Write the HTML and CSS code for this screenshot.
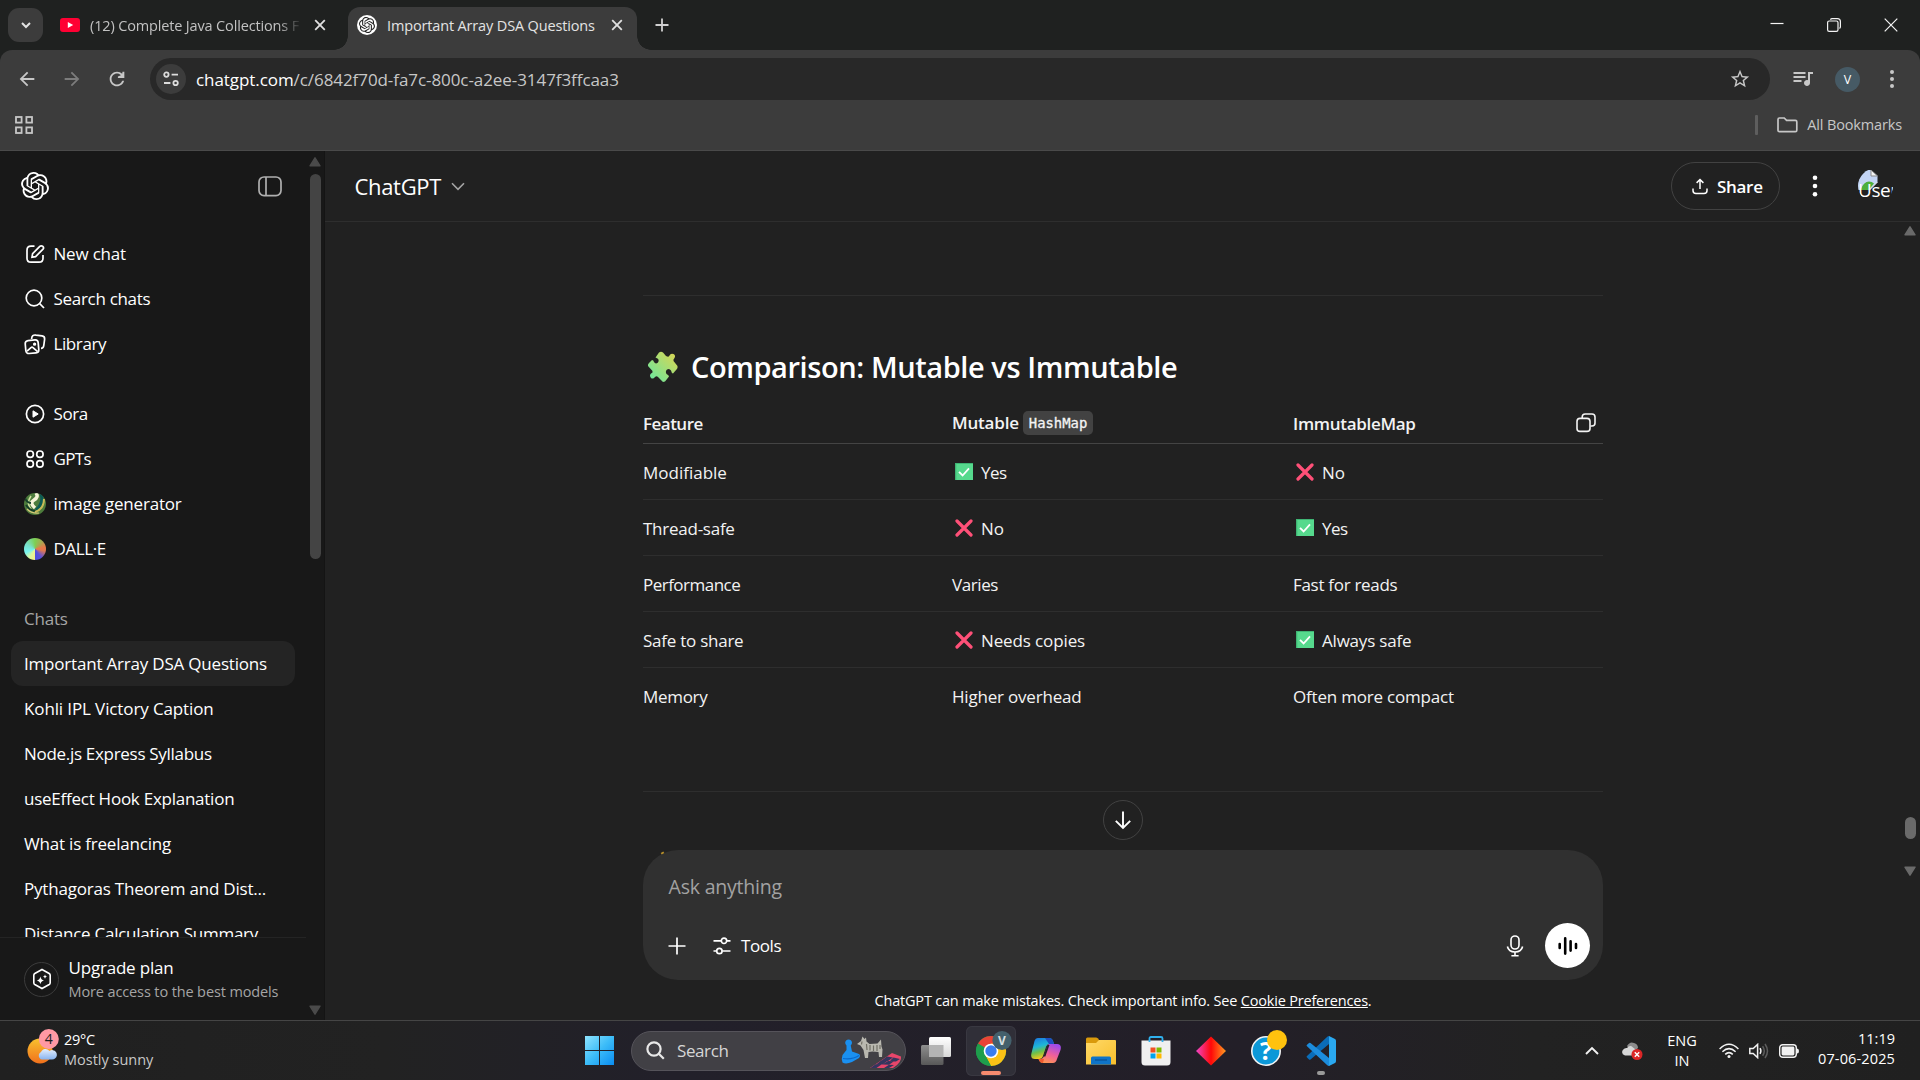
FILE: index.html
```html
<!DOCTYPE html>
<html lang="en">
<head>
<meta charset="utf-8">
<title>Important Array DSA Questions</title>
<link rel="stylesheet" href="styles.css">
</head>
<body>
<svg class="defs" width="0" height="0">
  <defs>
    <symbol id="openai" viewBox="0 0 24 24"><path d="M22.2819 9.8211a5.9847 5.9847 0 0 0-.5157-4.9108 6.0462 6.0462 0 0 0-6.5098-2.9A6.0651 6.0651 0 0 0 4.9807 4.1818a5.9847 5.9847 0 0 0-3.9977 2.9 6.0462 6.0462 0 0 0 .7427 7.0966 5.98 5.98 0 0 0 .511 4.9107 6.051 6.051 0 0 0 6.5146 2.9001A5.9847 5.9847 0 0 0 13.2599 24a6.0557 6.0557 0 0 0 5.7718-4.2058 5.9894 5.9894 0 0 0 3.9977-2.9001 6.0557 6.0557 0 0 0-.7475-7.0729zm-9.022 12.6081a4.4755 4.4755 0 0 1-2.8764-1.0408l.1419-.0804 4.7783-2.7582a.7948.7948 0 0 0 .3927-.6813v-6.7369l2.02 1.1686a.071.071 0 0 1 .038.052v5.5826a4.504 4.504 0 0 1-4.4945 4.4944zm-9.6607-4.1254a4.4708 4.4708 0 0 1-.5346-3.0137l.142.0852 4.783 2.7582a.7712.7712 0 0 0 .7806 0l5.8428-3.3685v2.3324a.0804.0804 0 0 1-.0332.0615L9.74 19.9502a4.4992 4.4992 0 0 1-6.1408-1.6464zM2.3408 7.8956a4.485 4.485 0 0 1 2.3655-1.9728V11.6a.7664.7664 0 0 0 .3879.6765l5.8144 3.3543-2.0201 1.1685a.0757.0757 0 0 1-.071 0l-4.8303-2.7865A4.504 4.504 0 0 1 2.3408 7.872zm16.5963 3.8558L13.1038 8.364 15.1192 7.2a.0757.0757 0 0 1 .071 0l4.8303 2.7913a4.4944 4.4944 0 0 1-.6765 8.1042v-5.6772a.79.79 0 0 0-.407-.667zm2.0107-3.0231l-.142-.0852-4.7735-2.7818a.7759.7759 0 0 0-.7854 0L9.409 9.2297V6.8974a.0662.0662 0 0 1 .0284-.0615l4.8303-2.7866a4.4992 4.4992 0 0 1 6.6802 4.66zM8.3065 12.863l-2.02-1.1638a.0804.0804 0 0 1-.038-.0567V6.0742a4.4992 4.4992 0 0 1 7.3757-3.4537l-.142.0805L8.704 5.459a.7948.7948 0 0 0-.3927.6813zm1.0976-2.3654l2.602-1.4998 2.6069 1.4998v2.9994l-2.5974 1.4997-2.6067-1.4997Z"/></symbol>
    <symbol id="yes" viewBox="0 0 18 18"><rect width="18" height="17" fill="#3fb574"/><rect x="1.3" y="1" width="16.7" height="16" fill="#56d98d"/><path d="M4 8.8l3.6 3.7L14 5.3" fill="none" stroke="#fff" stroke-width="1.8"/></symbol>
    <symbol id="no" viewBox="0 0 18 18"><path d="M2 2l14 14M16 2L2 16" fill="none" stroke="#ff5078" stroke-width="3.2" stroke-linecap="round"/></symbol>
    <linearGradient id="puz" x1="1" y1="0" x2="0" y2="1"><stop offset="0" stop-color="#e0d44e"/><stop offset="1" stop-color="#62e8a4"/></linearGradient>
    <linearGradient id="dia"><stop offset="0" stop-color="#f046c8"/><stop offset=".5" stop-color="#ff0808"/><stop offset="1" stop-color="#ff9a20"/></linearGradient>
    <linearGradient id="cop1" x1="0" y1="0" x2=".3" y2="1"><stop offset="0" stop-color="#1a72e0"/><stop offset=".45" stop-color="#1fb6d8"/><stop offset=".7" stop-color="#6cc04a"/><stop offset="1" stop-color="#f4c81e"/></linearGradient>
    <linearGradient id="cop2" x1=".6" y1="0" x2=".2" y2="1"><stop offset="0" stop-color="#a04bea"/><stop offset=".5" stop-color="#f0609a"/><stop offset="1" stop-color="#ff9a4a"/></linearGradient>
    <linearGradient id="win" x1="0" y1="0" x2="1" y2="1"><stop offset="0" stop-color="#8fe4ff"/><stop offset=".5" stop-color="#3cbcf8"/><stop offset="1" stop-color="#0a8cf0"/></linearGradient>
    <linearGradient id="fold" x1="0" y1="0" x2="1" y2="1"><stop offset="0" stop-color="#ffd968"/><stop offset="1" stop-color="#f8bf2c"/></linearGradient>
    <linearGradient id="sun" x1="0" y1="0" x2="0" y2="1"><stop offset="0" stop-color="#f9c22e"/><stop offset="1" stop-color="#f0701c"/></linearGradient>
    <linearGradient id="cld" x1="0" y1="0" x2="0" y2="1"><stop offset="0" stop-color="#e4eefc"/><stop offset="1" stop-color="#88b4f0"/></linearGradient>
    <linearGradient id="tv1" x1="0" y1="0" x2="0" y2="1"><stop offset="0" stop-color="#ffffff"/><stop offset="1" stop-color="#d8d8d8"/></linearGradient>
    <linearGradient id="tv2" x1="0" y1="0" x2="0" y2="1"><stop offset="0" stop-color="#8e8e8e"/><stop offset="1" stop-color="#585858"/></linearGradient>
    <clipPath id="disc"><circle cx="11" cy="11" r="11"/></clipPath>
  </defs>
</svg>

<div class="tabstrip">
  <div class="tab-search"><svg width="14" height="14" viewBox="0 0 14 14"><path d="M3 5l4 4 4-4" fill="none" stroke="#e3e3e3" stroke-width="2"/></svg></div>
  <div class="tab idle">
    <svg width="20" height="14" viewBox="0 0 20 14"><rect width="20" height="14" rx="3" fill="#ff0033"/><path d="M7.8 4l5.4 3-5.4 3z" fill="#fff"/></svg>
    <span class="tab-title">(12) Complete Java Collections F</span>
    <svg class="x" width="12" height="12" viewBox="0 0 12 12"><path d="M1.2 1.2l9.6 9.6M10.8 1.2l-9.6 9.6"/></svg>
  </div>
  <div class="tab active">
    <span class="favicon"><svg width="16" height="16" fill="#222"><use href="#openai"/></svg></span>
    <span class="tab-title">Important Array DSA Questions</span>
    <svg class="x" width="12" height="12" viewBox="0 0 12 12"><path d="M1.2 1.2l9.6 9.6M10.8 1.2l-9.6 9.6"/></svg>
  </div>
  <svg class="plus" width="14" height="14" viewBox="0 0 14 14"><path d="M7 .5v13M.5 7h13" stroke="#d0d0d0" stroke-width="1.8"/></svg>
  <div class="win-controls">
    <svg width="14" height="14" viewBox="0 0 14 14"><path d="M.5 5.5h13"/></svg>
    <svg width="14" height="14" viewBox="0 0 14 14"><rect x=".6" y="3" width="10.4" height="10.4" rx="1.6"/><path d="M3.4 1.6q.6-1 1.8-1h5.2a3 3 0 0 1 3 3v5.2q0 1-.9 1.6"/></svg>
    <svg width="14" height="14" viewBox="0 0 14 14"><path d="M.7.7l12.6 12.6M13.3.7L.7 13.3"/></svg>
  </div>
</div>

<div class="toolbar-back">
<div class="toolbar">
  <div class="nav">
    <svg width="22" height="22" viewBox="0 0 24 24" fill="#c7c7c7"><path d="M20 11H7.83l5.59-5.59L12 4l-8 8 8 8 1.41-1.41L7.83 13H20z"/></svg>
    <svg width="22" height="22" viewBox="0 0 24 24" fill="#7c7c7c"><path d="M4 11h12.17l-5.59-5.59L12 4l8 8-8 8-1.41-1.41L16.17 13H4z"/></svg>
    <svg width="22" height="22" viewBox="0 0 24 24" fill="#c7c7c7"><path d="M17.65 6.35C16.2 4.9 14.21 4 12 4c-4.42 0-7.99 3.58-7.99 8s3.57 8 7.99 8c3.73 0 6.84-2.55 7.73-6h-2.08c-.82 2.33-3.04 4-5.65 4-3.31 0-6-2.69-6-6s2.69-6 6-6c1.66 0 3.14.69 4.22 1.78L13 9.4v1.6h7V4h-2z"/></svg>
  </div>
  <div class="omnibox">
    <span class="tune"><svg width="16" height="16" viewBox="0 0 16 16" fill="none" stroke="#dcdcdc" stroke-width="1.8"><circle cx="3.4" cy="3.6" r="2.2"/><path d="M8.6 3.6H15M1 12h6.4"/><circle cx="12.6" cy="12" r="2.2"/></svg></span>
    <span class="url">chatgpt.com<i>/c/6842f70d-fa7c-800c-a2ee-3147f3ffcaa3</i></span>
    <svg class="star" width="22" height="22" viewBox="0 0 24 24" fill="#c7c7c7"><path d="M22 9.24l-7.19-.62L12 2 9.19 8.63 2 9.24l5.46 4.73L5.82 21 12 17.27 18.18 21l-1.63-7.03L22 9.24zM12 15.4l-3.76 2.27 1-4.28-3.32-2.88 4.38-.38L12 6.1l1.71 4.04 4.38.38-3.32 2.88 1 4.28L12 15.4z"/></svg>
  </div>
  <svg class="queue" width="24" height="24" viewBox="0 0 24 24" fill="#c7c7c7"><path d="M14.500 5h-12v1.900h12V5zm0 4h-12v1.900h12V9zM2.500 14.900h8V13h-8v1.900zM17 5v8.180c-.31-.11-.65-.18-1-.18-1.660 0-3 1.340-3 3s1.340 3 3 3 3-1.340 3-3V7h3V5h-5z"/></svg>
  <span class="profile">V</span>
  <svg class="kebab" width="6" height="20" viewBox="0 0 6 20" fill="#c7c7c7"><circle cx="3" cy="3" r="2"/><circle cx="3" cy="10" r="2"/><circle cx="3" cy="17" r="2"/></svg>
</div>
</div>

<div class="bookmarks">
  <svg width="18" height="18" viewBox="0 0 18 18" fill="none" stroke="#c7c7c7" stroke-width="1.8"><rect x="1" y="1" width="5.6" height="5.6"/><rect x="11.4" y="1" width="5.6" height="5.6"/><rect x="1" y="11.4" width="5.6" height="5.6"/><rect x="11.4" y="11.4" width="5.6" height="5.6"/></svg>
  <div class="all-bm">
    <span class="sep"></span>
    <svg width="21" height="16" viewBox="0 0 21 16" fill="none" stroke="#c7c7c7" stroke-width="1.7"><path d="M1 13.200V2.400Q1 1 2.400 1h4.800l2.400 2.400h8.800q1.400 0 1.400 1.400v8.400q0 1.400-1.400 1.400H2.400Q1 14.600 1 13.200z"/></svg>
    <span class="bm-text">All Bookmarks</span>
  </div>
</div>

<div class="page">
  <aside class="sidebar">
    <div class="side-col">
      <div class="side-head">
        <svg width="28" height="28" fill="#fff"><use href="#openai"/></svg>
        <svg width="24" height="21" viewBox="0 0 24 21" fill="none" stroke="#afafaf" stroke-width="1.7"><rect x="1" y="1" width="22" height="18.6" rx="5"/><path d="M8 1v18.600"/></svg>
      </div>
      <nav class="menu">
        <a><svg width="22" height="22" viewBox="0 0 22 22" class="ln"><path d="M10.500 3.200H7Q3 3.200 3 7.200v8Q3 19.200 7 19.200h8q4 0 4-4V12"/><path d="M8 14.200l.6-3.600L15.800 3.400a2 2 0 0 1 3 3L11.600 13.600z"/></svg><span class="t17">New chat</span></a>
        <a><svg width="22" height="22" viewBox="0 0 22 22" class="ln"><circle cx="10" cy="10" r="7.8"/><path d="M15.700 15.700l4.300 4.300"/></svg><span class="t17 n3">Search chats</span></a>
        <a><svg width="22" height="22" viewBox="0 0 22 22" class="ln"><rect x="1.5" y="7.2" width="13" height="13" rx="3" transform="rotate(-5 8 13.7)"/><path d="M3 18.200l4-3.600q1-.8 2 0l4.600 4M7.600 6q.3-4.600 4.400-3.900l6 .8q3 .4 2.600 3.400l-.8 6q-.4 3-2.800 3"/><circle cx="10.6" cy="11.2" r=".8"/></svg><span class="t17 n4">Library</span></a>
      </nav>
      <nav class="menu">
        <a><svg width="22" height="22" viewBox="0 0 22 22" class="ln"><circle cx="11" cy="11" r="8.6"/><path d="M9 7.800l5.200 3.200L9 14.200z" fill="#fff" stroke-width="1"/></svg><span class="t17 n4">Sora</span></a>
        <a><svg width="22" height="22" viewBox="0 0 22 22" class="ln"><circle cx="6.200" cy="6.200" r="3.200"/><circle cx="15.900" cy="6.200" r="3.200"/><circle cx="6.200" cy="15.900" r="3.200"/><circle cx="15.900" cy="15.900" r="3.200"/></svg><span class="t17 n6">GPTs</span></a>
        <a><svg width="22" height="22" viewBox="0 0 22 22"><g clip-path="url(#disc)" fill="none"><rect width="22" height="22" fill="#4d7c3c"/><path d="M7 3q-5 7 0 13" stroke="#cfe0a0" stroke-width="1.6"/><path d="M12 0q3 4-2 7t1 8" stroke="#f6f4d8" stroke-width="3.500"/><path d="M17 1q3 9-5 16" stroke="#0c5a54" stroke-width="3"/><path d="M1 5q2 5 6 5M2 12q4 6 10 6" stroke="#16402a" stroke-width="2"/><path d="M20 6q0 10-9 13" stroke="#c8ba58" stroke-width="2"/><path d="M3 16q5 5 12 4" stroke="#d4c878" stroke-width="1.200"/></g></svg><span class="t17">image generator</span></a>
        <a><span class="dalle"></span><span class="t17 n4">DALL·E</span></a>
      </nav>
      <div class="chats">
        <div class="label"><span class="t17">Chats</span></div>
        <a class="on"><span class="t17">Important Array DSA Questions</span></a>
        <a><span class="t17 n1">Kohli IPL Victory Caption</span></a>
        <a><span class="t17 n3">Node.js Express Syllabus</span></a>
        <a><span class="t17 n25">useEffect Hook Explanation</span></a>
        <a><span class="t17">What is freelancing</span></a>
        <a><span class="t17">Pythagoras Theorem and Dist...</span></a>
        <a><span class="t17 n25">Distance Calculation Summary</span></a>
      </div>
      <div class="upgrade">
        <span class="badge-ring"><svg width="22" height="22" viewBox="0 0 22 22" fill="none" stroke="#fff" stroke-width="1.6"><path d="M11 1.500l7.200 4q1 .6 1 1.800v7.400q0 1.200-1 1.800L11 20.500l-7.200-4q-1-.6-1-1.800V7.300q0-1.200 1-1.800z"/><path d="M9.400 8.600q.6 3.400 3.600 3.800-3 .6-3.600 3.800-.6-3.200-3.600-3.800 3-.4 3.600-3.800zM14 6.400q.3 1.800 2 2.200-1.700.4-2 2.200-.3-1.800-2-2.200 1.700-.4 2-2.200z" fill="#fff" stroke="none"/></svg></span>
        <div class="up-text"><span class="t17">Upgrade plan</span><span class="t15 n1 dim">More access to the best models</span></div>
      </div>
    </div>
    <div class="vbar">
      <svg width="12" height="10" viewBox="0 0 12 10"><path d="M6 .8l5 8H1z" stroke-width="1.4"/></svg>
      <span class="thumb"></span>
      <svg class="down" width="12" height="10" viewBox="0 0 12 10"><path d="M6 9.200l5-8H1z" stroke-width="1.4"/></svg>
    </div>
  </aside>

  <main class="main">
    <header class="topbar">
      <span class="brand">ChatGPT</span>
      <svg width="14" height="9" viewBox="0 0 14 9" fill="none" stroke="#a5a5a5" stroke-width="1.6"><path d="M1 1.300l6 6 6-6"/></svg>
      <div class="actions">
        <span class="share"><svg width="16" height="17" viewBox="0 0 16 17" fill="none" stroke="#fff" stroke-width="1.5"><path d="M8 11V1.500M4.600 4.900L8 1.500l3.400 3.400M1 10.500v2q0 3 3 3h8q3 0 3-3v-2"/></svg><span class="t17 semi n3">Share</span></span>
        <svg class="dots" width="6" height="22" viewBox="0 0 6 22" fill="#fff"><circle cx="3" cy="2.800" r="2.300"/><circle cx="3" cy="11" r="2.300"/><circle cx="3" cy="19.200" r="2.300"/></svg>
        <span class="avatar"><svg width="20" height="20" viewBox="0 0 20 20"><path d="M0 0h13l6.500 6v6l-8 8H0z" fill="#c3d4f4"/><path d="M2.500 20q3-8.500 8.500-8.500 3 0 5 2L10.500 20z" fill="#4caf3c"/><path d="M19.500 12l-8 8" stroke="#f4f4f4"/><path d="M13 0v6h6.500z" fill="#f4f4f4" stroke="#8a8a8a"/></svg><b>User</b></span>
      </div>
    </header>
    <div class="scroll-area">
      <div class="content">
        <div class="rule top"></div>
        <h2><svg width="31" height="32" viewBox="0 0 31 32"><path d="M8.500 6.500L12 1.500q2-1.500 4 0l3 3.500q3 1.500 3.500-.5 1-2.500 4-1.500 2.500 1.500 1 4-1.500 1.500-1 3l4 5q.5 2-1 3.500l-3.500 4q-1.500-.5-2-3-1.500-2.500-4-1-2 2-.5 4.500 2.500 1 2.500 2.500l-4 5-2 .5-5-5q-1.500-1.500-3 0-2 2.500-4 1-2-2.500 0-4.500 2-.5 1.500-2.500L1 15q-.5-1.500 1-3l3-3q1.500 0 2 2 1.500 2.500 4 .5 1.500-2.500-.5-4z" fill="url(#puz)"/></svg><span>Comparison: Mutable vs Immutable</span></h2>
        <div class="table">
          <div class="tr th"><span><b class="t17 semi n5">Feature</b></span><span class="c2"><b class="t17 semi">Mutable</b><code>HashMap</code></span><span><b class="t17 semi n3">ImmutableMap</b></span>
            <svg class="copy" width="20" height="20" viewBox="0 0 20 20" fill="none" stroke="#f3f3f3" stroke-width="1.6"><rect x="1" y="5.4" width="13" height="13" rx="3"/><path d="M6.200 5V4q0-3 3-3H16q3 0 3 3v6q0 3-3 3h-1.500"/></svg></div>
          <div class="tr"><span><b class="t17 n0">Modifiable</b></span><span><svg class="em"><use href="#yes"/></svg><b class="t17 n5">Yes</b></span><span><svg class="em"><use href="#no"/></svg><b class="t17 n0">No</b></span></div>
          <div class="tr"><span><b class="t17 n25">Thread-safe</b></span><span><svg class="em"><use href="#no"/></svg><b class="t17 n0">No</b></span><span><svg class="em"><use href="#yes"/></svg><b class="t17 n5">Yes</b></span></div>
          <div class="tr"><span><b class="t17 n5">Performance</b></span><span><b class="t17 n4">Varies</b></span><span><b class="t17 n3">Fast for reads</b></span></div>
          <div class="tr"><span><b class="t17 n25">Safe to share</b></span><span><svg class="em"><use href="#no"/></svg><b class="t17 n1">Needs copies</b></span><span><svg class="em"><use href="#yes"/></svg><b class="t17">Always safe</b></span></div>
          <div class="tr"><span><b class="t17 n3">Memory</b></span><span><b class="t17">Higher overhead</b></span><span><b class="t17">Often more compact</b></span></div>
        </div>
        <div class="rule"></div>
        <div class="jump"><svg width="18" height="20" viewBox="0 0 18 20" fill="none" stroke="#fff" stroke-width="1.9"><path d="M9 1.500v16.500M1.800 10.800L9 18l7.200-7.200"/></svg></div>
        <div class="composer">
          <span class="ask">Ask anything</span>
          <div class="tools">
            <svg width="18" height="18" viewBox="0 0 18 18" stroke="#fff" stroke-width="1.7"><path d="M9 .500v17M.500 9h17"/></svg>
            <svg class="sliders" width="18" height="18" viewBox="0 0 18 18" fill="none" stroke="#fff" stroke-width="1.7"><path d="M.500 3.800h7.500M14 3.800h3.500M.500 14h3M9.500 14h8"/><circle cx="11" cy="3.800" r="2.700"/><circle cx="6.400" cy="14" r="2.700"/></svg>
            <span class="t17 n4">Tools</span>
            <svg class="mic" width="18" height="22" viewBox="0 0 18 22" fill="none" stroke="#fff" stroke-width="1.6"><rect x="5" y="1" width="8" height="13" rx="4"/><path d="M1.400 11.500Q2.600 17 9 17t7.600-5.500M9 17v4M5.400 20.700h7.200"/></svg>
            <span class="voice"><svg width="20" height="18" viewBox="0 0 20 18" stroke="#000" stroke-width="2.6" stroke-linecap="round"><path d="M1.700 7v4M7.200 1.400v15.200M12.600 4.400v9.200M18 7v4"/></svg></span>
          </div>
          <i class="fleck"></i>
        </div>
        <p class="note"><span class="t15">ChatGPT can make mistakes. Check important info. See <u>Cookie Preferences</u>.</span></p>
      </div>
      <div class="vbar light">
        <svg width="12" height="10" viewBox="0 0 12 10"><path d="M6 .8l5 8H1z" stroke-width="1.4"/></svg>
        <span class="thumb"></span>
        <svg class="down" width="12" height="10" viewBox="0 0 12 10"><path d="M6 9.200l5-8H1z" stroke-width="1.4"/></svg>
      </div>
    </div>
  </main>
</div>

<footer class="taskbar">
  <div class="weather">
    <svg width="34" height="38" viewBox="0 0 34 38"><circle cx="14" cy="24" r="12.5" fill="url(#sun)"/><path d="M14 31.500a4 4 0 0 1 1-6.500 5 5 0 0 1 8.500-1 4.500 4.500 0 0 1 5.500 7.500q-1 1-3 1H16q-1.500 0-2-1z" fill="url(#cld)"/><circle cx="22.800" cy="12" r="10" fill="#ff99a4"/><text x="22.800" y="17" text-anchor="middle" font-size="14" fill="#202020">4</text></svg>
    <div><span class="t15 n3">29°C</span><span class="t15 n0 mut">Mostly sunny</span></div>
  </div>
  <div class="apps">
    <svg class="start" width="29" height="29" viewBox="0 0 29 29"><path d="M0 0h14v14H0zM15 0h14v14H15zM0 15h14v14H0zM15 15h14v14H15z" fill="url(#win)"/></svg>
    <div class="search">
      <svg width="19" height="19" viewBox="0 0 19 19" fill="none" stroke="#e8e8e8" stroke-width="2.2"><circle cx="8" cy="8" r="6.600"/><path d="M12.800 12.800l5 5"/></svg>
      <span class="t17 n4">Search</span>
      <svg class="game" width="62" height="36" viewBox="0 0 62 36"><path d="M30 35L52 20l9 3.500q1 6-8 11.500z" fill="#e8466a"/><path d="M35.500 31.300l6 .2-5 3.500h-6zM41.500 27.300l6 .5-5 3.700-6-.2zM47 23.500l6 1-5 3.500-6-.7zM48 28l6 .3-5 3.500-6.500-.3zM53.500 24.500l6.500 1.500-4 2.500-6-.7zM49 31.800l5 .2-5 3-5 0z" fill="#34365e"/><path d="M2.500 22l4-5V12.500a3.400 3.400 0 1 1 4.200 0l1.300 6 7 2.500q2 1.500 0 4l-7 4q-6 2.500-9.500.5-1.500-3.500 0-7.500z" fill="#1a90f0"/><path d="M3 25.500q9 1.500 16-3" stroke="#0a68cc" stroke-width="1.200" fill="none"/><path d="M17 11l4-3 1.500-4.500 2 2.500 1.500-1.500.5 4 3 2.500 8-.5L41 6.500l.5 7 1 3-.5 7.500h-3l-.5-5-6-.5-4 .5-.5 6h-3l-1.500-8-3-4.500z" fill="#b9b8b0"/><path d="M22 8.500l-.5 3M26.500 11l.5 6M30 12v5.500M33.500 12.500v5.500M37 12v6M40 12v4" stroke="#716f66" stroke-width="1.200"/></svg>
    </div>
    <svg class="tview" width="30" height="28" viewBox="0 0 30 28"><rect y="8" width="22.5" height="20" rx="1.5" fill="url(#tv2)"/><rect x="8" width="22" height="20" rx="1.5" fill="url(#tv1)"/><path d="M8 8h14.500v12H8z" fill="#b4b4b4"/></svg>
    <span class="app tile"><svg width="50" height="50" viewBox="0 0 50 50"><circle cx="25" cy="25" r="15" fill="#1e9e4c"/><path d="M25 25L12 17.500A15 15 0 0 1 38 17.500z" fill="#ea4335"/><path d="M25 25L38 17.500A15 15 0 0 1 25 40z" fill="#fbc116"/><path d="M25 18h13.200l-.2-.5H25zM18.900 28.500l6.100 11.500 6-11z" fill="#fbc116"/><path d="M12 17.500l7 11.500L25 40A15 15 0 0 1 12 17.500z" fill="#1e9e4c"/><circle cx="25" cy="25" r="7.3" fill="#fff"/><circle cx="25" cy="25" r="5.7" fill="#3a7df0"/><circle cx="36" cy="14.5" r="9.6" fill="#44606c"/><text x="36" y="19" text-anchor="middle" font-size="12" font-weight="700" fill="#d8e0e4">V</text><rect x="15" y="45" width="20" height="4" rx="2" fill="#f58a6e"/></svg></span>
    <span class="app"><svg width="30" height="27" viewBox="0 0 30 27"><path d="M7 1h11q3 0 4 3l1 3h-5q-2 0-3 3l-3 9q-1 3-4 3H4q-5 0-3.500-6L3.500 4q1-3 3.500-3z" fill="url(#cop1)"/><path d="M18 7h8q5 0 3.500 6L26 22q-1 4-4 4H12q-3 0-4-3l-.5-1H9q3 0 4-3l3-9q.6-2.400 2-3z" fill="url(#cop2)"/><path d="M14 1h4q3 0 4 3l1 3h-5z" fill="#1d4fc0"/><path d="M12 26q-3 0-4-3l-.3-1h5.300z" fill="#f05a30"/><path d="M16.500 8l-4 11.500h1.800L18.500 8z" fill="#24222a"/></svg></span>
    <span class="app"><svg width="30" height="28" viewBox="0 0 30 28"><path d="M0 2q0-1.500 1.500-1.500H10q1 0 1.700.8L13.500 3.500 10 8H0z" fill="#d99a0c"/><path d="M0 6h10l3-3h16q1 0 1 1v23.500H0z" fill="url(#fold)"/><path d="M5 21q0-1.500 1.500-1.500h17Q25 19.500 25 21v6.500H5z" fill="#0f74c8"/><path d="M9 23h12" stroke="#0a4f94" stroke-width="1.2"/></svg></span>
    <span class="app"><svg width="30" height="30" viewBox="0 0 30 30"><path d="M.500 4.500h29V26q0 3.500-3.500 3.500H4Q.500 29.500.500 26z" fill="#f0f0f0"/><path d="M8.500 6V2.500Q8.500 1 10 1h10q1.500 0 1.500 1.500V6" fill="none" stroke="#2fb0ee" stroke-width="1.8"/><path d="M9.500 11.500h5v5h-5z" fill="#f25022"/><path d="M15.500 11.500h5v5h-5z" fill="#7fba00"/><path d="M9.500 17.500h5v5h-5z" fill="#00a4ef"/><path d="M15.500 17.500h5v5h-5z" fill="#ffb900"/></svg></span>
    <span class="app"><svg width="30" height="30" viewBox="0 0 30 30"><path d="M15 .500L30 15 15 29.500 0 15z" fill="url(#dia)"/></svg></span>
    <span class="app"><svg width="50" height="50" viewBox="0 0 50 50"><circle cx="25" cy="25" r="14.2" fill="#0c98d8" stroke="#f4f4f4" stroke-width="1.6"/><text x="25" y="34" text-anchor="middle" font-size="25" font-weight="700" fill="#fff">?</text><circle cx="36" cy="14" r="10" fill="#ffc20e"/></svg></span>
    <span class="app"><svg width="50" height="50" viewBox="0 0 50 50"><path d="M33 10l6 3q1 .6 1 2v20q0 1.400-1 2l-6 3z" fill="#2aa8f0"/><path d="M33 18L14.500 33.500q-.8.600-1.500 0l-2-2q-1-.8 0-1.600L31 11q1-1 2-1z" fill="#0a6cb8"/><path d="M33 32L14.500 17q-.8-.6-1.500 0l-2 1.700q-1 .8 0 1.600L31 39q1 1 2 1z" fill="#1c8cdc"/><rect x="21" y="45" width="8" height="4" rx="2" fill="#9a9a9a"/></svg></span>
  </div>
  <div class="tray">
    <svg class="chev" width="14" height="9" viewBox="0 0 14 9" fill="none" stroke="#f2f2f2" stroke-width="1.9"><path d="M1 8l6-6 6 6"/></svg>
    <svg class="cloud" width="21" height="18" viewBox="0 0 21 18"><path d="M5 4Q8-1 12 1q4 1 4 5l-6 5z" fill="#8c8c8c"/><path d="M3 13.500Q-1 12 .500 8.500 2 5.500 5 6q3-3.500 6-.500 4 2 3 8z" fill="#d6d6d6"/><circle cx="15" cy="12.5" r="5.5" fill="#dc2626"/><path d="M12.800 10.300l4.400 4.400M17.200 10.300l-4.400 4.400" stroke="#fff" stroke-width="1.4"/></svg>
    <div class="lang"><span class="t15 n0">ENG</span><span class="t15 n0">IN</span></div>
    <svg class="wifi" width="20" height="16" viewBox="0 0 20 16" fill="none" stroke="#f2f2f2" stroke-width="1.5"><path d="M.600 6Q10-3.400 19.400 6M3.400 8.800q6.600-6.400 13.200 0M6.200 11.400q3.800-3.600 7.600 0"/><circle cx="10" cy="13.6" r="1.5" fill="#f2f2f2" stroke="none"/></svg>
    <svg class="vol" width="20" height="16" viewBox="0 0 20 16" fill="none" stroke="#f2f2f2" stroke-width="1.5"><path d="M.800 5.500h3.400L8.600 1.400v13.200L4.200 10.500H.800z"/><path d="M11 5.200q1.800 2.800 0 5.600"/><path d="M13.600 3.200q3.400 4.800 0 9.600M16 1q5 7 0 14" stroke="#5c5c5c"/></svg>
    <svg class="batt" width="20" height="14" viewBox="0 0 20 14"><rect x=".7" y=".7" width="16.6" height="12.6" rx="3" fill="none" stroke="#f2f2f2" stroke-width="1.4"/><rect x="2.6" y="2.6" width="12.8" height="8.8" rx="1.4" fill="#f2f2f2"/><path d="M18 4.500q2 0 2 2.500t-2 2.500z" fill="#f2f2f2"/></svg>
    <div class="clock"><span class="t15 n0">11:19</span><span class="t15 wide">07-06-2025</span></div>
  </div>
</footer>
</body>
</html>
```

FILE: styles.css
```css
* { box-sizing: border-box; }
html, body { margin: 0; width: 1920px; height: 1080px; overflow: hidden; }
body { font-family: "Open Sans", "Noto Sans", sans-serif; color: #fff; background: #212121; display: flex; flex-direction: column; }
svg { display: block; flex: none; }
svg text { font-family: "Open Sans", sans-serif; }
.defs { position: absolute; }
b { font-weight: 400; }
span, b { white-space: nowrap; }
.t17 { font-size: 17px; letter-spacing: -.2px; }
.t15 { font-size: 14.5px; letter-spacing: -.19px; }
.semi { font-weight: 600; }
.n0 { letter-spacing: 0; }
.n1 { letter-spacing: -.12px; }
.n25 { letter-spacing: -.25px; }
.n3 { letter-spacing: -.3px; }
.n4 { letter-spacing: -.4px; }
.n5 { letter-spacing: -.52px; }
.n6 { letter-spacing: -.62px; }
.wide { letter-spacing: .13px; }

.tabstrip { height: 50px; flex: none; background: #1f2120; display: flex; align-items: center; }
.tab-search { width: 35px; height: 34px; margin-left: 8px; border-radius: 11px; background: #3c3c3c; display: flex; align-items: center; justify-content: center; }
.tab { display: flex; align-items: center; }
.idle { width: 305px; padding-left: 17px; }
.tab-title { font-size: 14.5px; line-height: 20px; padding-top: 1px; letter-spacing: -.15px; color: #e3e3e3; }
.idle .tab-title { margin-left: 10px; width: 212px; overflow: hidden; color: #c2c2c2; -webkit-mask-image: linear-gradient(90deg, #000 188px, transparent 212px); }
.x { stroke: #e0e0e0; stroke-width: 1.8; margin-left: 12px; }
.active { position: relative; align-self: flex-end; width: 289px; height: 43px; padding: 0 0 7px 9px; background: #3c3c3c; border-radius: 12px 12px 0 0; }
.active::before, .active::after { content: ""; position: absolute; bottom: 0; width: 14px; height: 14px; }
.active::before { left: -14px; background: radial-gradient(circle at 0 0, transparent 13.5px, #3c3c3c 14px); }
.active::after { right: -14px; background: radial-gradient(circle at 100% 0, transparent 13.5px, #3c3c3c 14px); }
.active .tab-title { margin-left: 10px; width: 209px; }
.active .x { margin-left: 15px; }
.favicon { width: 20px; height: 20px; border-radius: 50%; background: #fff; display: flex; align-items: center; justify-content: center; }
.plus { margin-left: 18px; }
.win-controls { margin-left: auto; padding-right: 22px; display: flex; gap: 43px; fill: none; stroke: #f4f4f4; stroke-width: 1.2; }

.toolbar-back { flex: none; background: #1f2120; }
.toolbar { height: 58px; background: #3c3c3c; border-radius: 12px 12px 0 0; display: flex; align-items: center; }
.nav { display: flex; gap: 23px; padding-left: 16px; width: 150px; }
.omnibox { width: 1620px; height: 42px; border-radius: 21px; background: #282828; display: flex; align-items: center; padding: 0 19px 0 6px; }
.tune { width: 30px; height: 30px; border-radius: 50%; background: #3c3c3c; display: flex; align-items: center; justify-content: center; }
.url { font-size: 17px; margin-left: 10px; letter-spacing: -.07px; }
.url i { font-style: normal; color: #c7c7c7; }
.star { margin-left: auto; }
.queue { margin-left: 21px; }
.profile { margin-left: 20px; width: 25px; height: 25px; border-radius: 50%; background: #465a65; font-size: 12.5px; line-height: 25px; text-align: center; }
.kebab { margin-left: 29px; }
.bookmarks { height: 43px; flex: none; background: #3c3c3c; border-bottom: 1px solid #4a4a4a; display: flex; align-items: center; justify-content: space-between; padding: 0 18px 8px 15px; }
.all-bm { display: flex; align-items: center; }
.sep { width: 3px; height: 20px; border-radius: 1px; background: #5e5e5e; margin-right: 19px; }
.bm-text { font-size: 14.5px; letter-spacing: -.15px; line-height: 20px; color: #c7c7c7; margin-left: 9px; }

.page { height: 869px; flex: none; display: flex; }
.sidebar { width: 325px; background: #181818; display: flex; border-right: 1px solid #141414; }
.side-col { width: 306px; display: flex; flex-direction: column; }
.side-head { height: 70px; display: flex; align-items: center; justify-content: space-between; padding: 0 24px 0 21px; margin-bottom: 10px; }
.menu { display: flex; flex-direction: column; margin-bottom: 25px; }
.menu a { height: 45px; display: flex; align-items: center; gap: 7.5px; padding-left: 24px; }
.ln { fill: none; stroke: #fff; stroke-width: 1.7; }
.dalle { width: 22px; height: 22px; border-radius: 50%; background: conic-gradient(#7ccf52 0, #a8a850 45deg, #e8784a 80deg, #e0784e 100deg, #5a50d8 145deg, #4a50dc 179deg, #f4f08a 181deg, #d8f8a0 215deg, #78f4f0 250deg, #78e0c8 300deg, #7ccf52 360deg); }
.chats { height: 341px; overflow: hidden; display: flex; flex-direction: column; padding-left: 11px; }
.chats > * { height: 45px; flex: none; display: flex; align-items: center; padding-left: 13px; }
.label { color: #a5a5a5; }
.on { width: 284px; background: #242424; border-radius: 12px; }
.upgrade { height: 83px; background: #181818; border-top: 1px solid #242424; display: flex; align-items: center; padding-left: 24px; gap: 9.5px; }
.badge-ring { width: 35px; height: 35px; border: 1px solid #3c3c3c; border-radius: 50%; display: flex; align-items: center; justify-content: center; }
.up-text { display: flex; flex-direction: column; align-items: flex-start; line-height: 24px; padding-top: 1px; }
.dim { color: #a5a5a5; }
.vbar { width: 12px; margin-left: 3px; padding: 6px 0 5px; display: flex; flex-direction: column; align-items: center; fill: #4a4a4a; stroke: #4a4a4a; stroke-linejoin: round; }
.vbar .thumb { width: 11px; height: 385px; border-radius: 6px; background: #444; margin-top: 7px; }
.vbar .down { margin-top: auto; }

.main { flex: 1; display: flex; flex-direction: column; }
.topbar { height: 71px; flex: none; border-bottom: 1px solid #2e2e2e; display: flex; align-items: center; padding-left: 29.5px; }
.brand { font-size: 22px; letter-spacing: -.32px; margin-right: 10px; }
.actions { margin-left: auto; display: flex; align-items: center; }
.share { width: 109px; height: 48px; border: 1px solid #424242; border-radius: 24px; display: flex; align-items: center; padding-left: 20px; gap: 9px; }
.dots { margin-left: 32px; }
.avatar { position: relative; width: 35px; height: 35px; margin: 0 27px 0 40px; clip-path: circle(17.5px); }
.avatar svg { margin-top: 1px; }
.avatar b { position: absolute; left: 0; top: 8px; font-size: 19px; line-height: 26px; letter-spacing: -.4px; }
.scroll-area { height: 798px; flex: none; display: flex; justify-content: space-between; }
.content { width: 960px; margin-left: 318px; display: flex; flex-direction: column; }
.content > * { flex: none; }
.rule { height: 1px; background: #2e2e2e; }
.rule.top { margin-top: 73px; }
h2 { margin: 45px 0 0; height: 50px; padding-left: 4px; display: flex; align-items: center; gap: 13px; font-weight: 600; font-size: 29px; letter-spacing: -.42px; }
h2 svg { margin-top: 2px; }
.table { height: 389px; margin-top: 11px; }
.tr { height: 56px; display: flex; align-items: center; border-bottom: 1px solid #2e2e2e; color: #f3f3f3; padding-top: 1px; }
.tr:last-child { border-bottom: 0; padding-top: 0; }
.tr > span { display: flex; align-items: center; }
.tr > span:nth-child(1) { width: 309px; }
.tr > span:nth-child(2) { width: 341px; }
.th { height: 42px; border-color: #444; }
.th > span { padding-top: 1px; }
.th .c2 { padding: 0; }
.th .c2 b { margin-top: -2px; }
code { font: 400 13.9px/24px "DejaVu Sans Mono", monospace; -webkit-text-stroke: .3px #f3f3f3; background: #424242; border-radius: 5px; padding: 0 6px; margin-left: 4px; }
.copy { margin-left: auto; margin-right: 7px; }
.em { width: 18px; height: 18px; margin: 0 8px 0 3px; }
.jump { align-self: center; width: 40px; height: 40px; border: 1px solid #424242; border-radius: 50%; margin: 8px 0 10px; display: flex; align-items: center; justify-content: center; }
.composer { position: relative; height: 130px; border-radius: 35px; background: #303030; padding: 22px 13px 12px 25px; display: flex; flex-direction: column; justify-content: space-between; align-items: flex-start; }
.fleck { position: absolute; left: 18px; top: 2px; width: 3px; height: 2px; background: #b8902c; transform: rotate(-30deg); }
.ask { font-size: 19.5px; letter-spacing: -.2px; line-height: 30px; color: #a2a2a2; padding-left: .5px; }
.tools { width: 100%; height: 45px; display: flex; align-items: center; }
.sliders { margin: 0 10px 0 27px; }
.mic { margin-left: auto; margin-right: 21px; }
.voice { width: 45px; height: 45px; border-radius: 50%; background: #fff; display: flex; align-items: center; justify-content: center; }
.note { margin: 0; height: 40px; line-height: 41px; text-align: center; }
.light { fill: #6a6a6a; stroke: #6a6a6a; height: 654px; margin: 0 4px 0 0; padding: 4px 0 0; }
.light .thumb { height: 22px; background: #6a6a6a; margin-top: 581px; }

.taskbar { height: 60px; flex: none; background: linear-gradient(90deg, #202020 0, #222 20%, #22202a 35%, #231f28 65%, #222 80%, #202020); border-top: 1px solid #454545; display: grid; grid-template-columns: 585px 1fr auto; align-items: center; }
.weather { display: flex; align-items: center; padding-left: 26px; gap: 4px; }
.weather div, .lang, .clock { display: flex; flex-direction: column; align-items: flex-start; line-height: 20px; }
.weather div { padding-bottom: 1px; }
.weather svg { margin-top: -10px; }
.mut { color: #c8c8c8; }
.apps { display: flex; align-items: center; }
.search { width: 275px; height: 40px; margin: 0 15px 0 17px; border: 1px solid #55535a; border-radius: 20px; background: #414045; display: flex; align-items: center; padding-left: 14px; gap: 12px; color: #d6d6d6; }
.game { margin-left: auto; margin-right: 3px; }
.tview { margin-right: 15px; }
.app { width: 50px; height: 50px; margin-right: 5px; display: flex; align-items: center; justify-content: center; }
.tile { background: #302f38; border-radius: 6px; box-shadow: inset 0 0 0 1px #393841; }
.tray { display: flex; align-items: center; padding-right: 24px; }
.cloud { margin-left: 23px; }
.lang { width: 40px; margin: 0 17px 0 19px; align-items: center; }
.vol { margin-left: 10px; }
.batt { margin-left: 10px; }
.clock { width: 97px; align-items: flex-end; padding: 0 1px 3px 0; }
```
